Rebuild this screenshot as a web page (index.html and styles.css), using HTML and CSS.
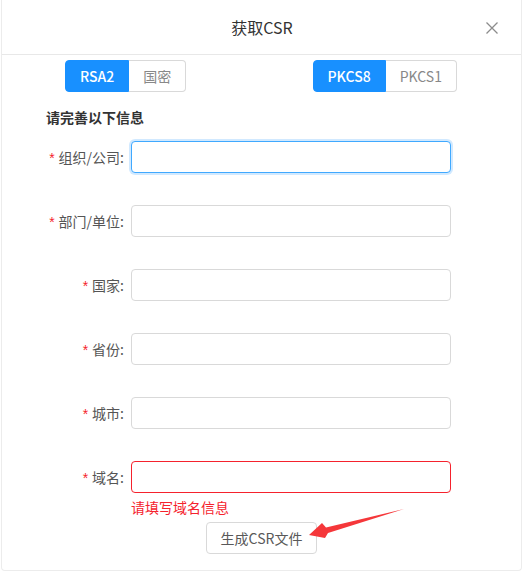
FILE: index.html
```html
<!DOCTYPE html>
<html lang="zh-CN">
<head>
    <meta charset="UTF-8">
    <meta name="viewport" content="width=device-width, initial-scale=1.0">
    <title>获取CSR</title>
    <link rel="stylesheet" href="styles.css">
</head>
<body>
    <div class="csr-dialog">
        <div class="dialog-header">
            <span class="dialog-title">获取CSR</span>
            <button type="button" class="close-button" aria-label="关闭">
                <svg width="12" height="12" viewBox="0 0 12 12">
                    <path d="M0.5 0.5 L11.5 11.5 M11.5 0.5 L0.5 11.5" stroke="#8c8c8c" stroke-width="1.3" fill="none"/>
                </svg>
            </button>
        </div>

        <div class="dialog-body">
            <div class="seg-row">
                <div class="seg-group">
                    <span class="seg-item active">RSA2</span>
                    <span class="seg-item">国密</span>
                </div>
                <div class="seg-group">
                    <span class="seg-item active">PKCS8</span>
                    <span class="seg-item">PKCS1</span>
                </div>
            </div>

            <div class="section-title">请完善以下信息</div>

            <form class="csr-form" onsubmit="return false">
                <div class="form-row">
                    <label for="org"><span class="req">*</span>组织/公司:</label>
                    <input type="text" id="org" class="focused">
                </div>
                <div class="form-row">
                    <label for="unit"><span class="req">*</span>部门/单位:</label>
                    <input type="text" id="unit">
                </div>
                <div class="form-row">
                    <label for="country"><span class="req">*</span>国家:</label>
                    <input type="text" id="country">
                </div>
                <div class="form-row">
                    <label for="province"><span class="req">*</span>省份:</label>
                    <input type="text" id="province">
                </div>
                <div class="form-row">
                    <label for="city"><span class="req">*</span>城市:</label>
                    <input type="text" id="city">
                </div>
                <div class="form-row last">
                    <label for="domain"><span class="req">*</span>域名:</label>
                    <input type="text" id="domain" class="has-error">
                </div>
                <div class="form-error">请填写域名信息</div>

                <div class="form-actions">
                    <button type="submit" class="gen-button">生成CSR文件</button>
                </div>
            </form>
        </div>

        <!-- annotation arrow -->
        <svg class="arrow" width="522" height="573" viewBox="0 0 522 573">
            <polygon points="308,535 321,523 325,527.5 403,509 327,533 324,538" fill="#f5373a"/>
        </svg>
    </div>
</body>
</html>
```

FILE: styles.css
```css
body {
    margin: 0;
    padding: 0;
    background-color: #fff;
    font-family: "Noto Sans CJK SC", "Noto Sans", sans-serif;
    font-size: 14px;
    color: #595959;
}

.csr-dialog {
    position: relative;
    width: 519px;
    height: 570px;
    margin-left: 1px;
    border: 1px solid #ececec;
    border-top: none;
    border-radius: 0 0 4px 4px;
    background: #fff;
}

.dialog-header {
    height: 54px;
    border-bottom: 1px solid #e8e8e8;
    display: flex;
    align-items: center;
    justify-content: center;
    position: relative;
}

.dialog-title {
    font-size: 16px;
    line-height: 22px;
    color: #333;
    font-weight: normal;
    margin-left: 1px;
}

.close-button {
    position: absolute;
    right: 22px;
    top: 21px;
    width: 14px;
    height: 14px;
    padding: 1px;
    border: none;
    background: none;
    display: flex;
    align-items: center;
    justify-content: center;
    cursor: pointer;
}

.dialog-body {
    padding-top: 5px;
}

.seg-row {
    display: flex;
    justify-content: space-between;
    padding: 0 64px 0 63px;
}

.seg-group {
    display: flex;
}

.seg-item {
    height: 30px;
    line-height: 30px;
    padding: 0 14px;
    border: 1px solid #d9d9d9;
    color: #888;
    font-size: 14px;
    background: #fff;
}

.seg-item:first-child {
    border-radius: 4px 0 0 4px;
}

.seg-item:last-child {
    border-left: none;
    border-radius: 0 4px 4px 0;
}

.seg-item.active {
    background: #1890ff;
    border-color: #1890ff;
    color: #fff;
    font-weight: 500;
}

.section-title {
    margin: 14px 0 0 44px;
    line-height: 22px;
    font-weight: bold;
    color: #333;
}

.csr-form {
    margin-top: 13px;
}

.form-row {
    display: flex;
    align-items: center;
    height: 32px;
    margin-bottom: 32px;
}

.form-row.last {
    margin-bottom: 0;
}

.form-row label {
    width: 122px;
    text-align: right;
    color: #555;
    line-height: 22px;
}

.req {
    color: #f5222d;
    font-family: SimSun, "Liberation Sans", sans-serif;
    margin-right: 4px;
}

.form-row input {
    width: 320px;
    height: 32px;
    margin-left: 7px;
    padding: 4px 11px;
    border: 1px solid #d9d9d9;
    border-radius: 4px;
    box-sizing: border-box;
    font-size: 14px;
    outline: none;
}

.form-row input.focused {
    border-color: #40a9ff;
    box-shadow: 0 0 0 2px rgba(24, 144, 255, 0.2);
}

.form-row input.has-error {
    border-color: #f5222d;
}

.form-error {
    margin: 3px 0 0 129px;
    line-height: 22px;
    color: #f5222d;
}

.form-actions {
    display: flex;
    justify-content: center;
    margin-top: 4px;
}

.gen-button {
    height: 32px;
    padding: 0 14px;
    border: 1px solid #d9d9d9;
    border-radius: 4px;
    background: #fff;
    color: #595959;
    font-family: inherit;
    font-size: 14px;
    cursor: pointer;
}

.arrow {
    position: absolute;
    left: -1px;
    top: 0;
    pointer-events: none;
}
```
